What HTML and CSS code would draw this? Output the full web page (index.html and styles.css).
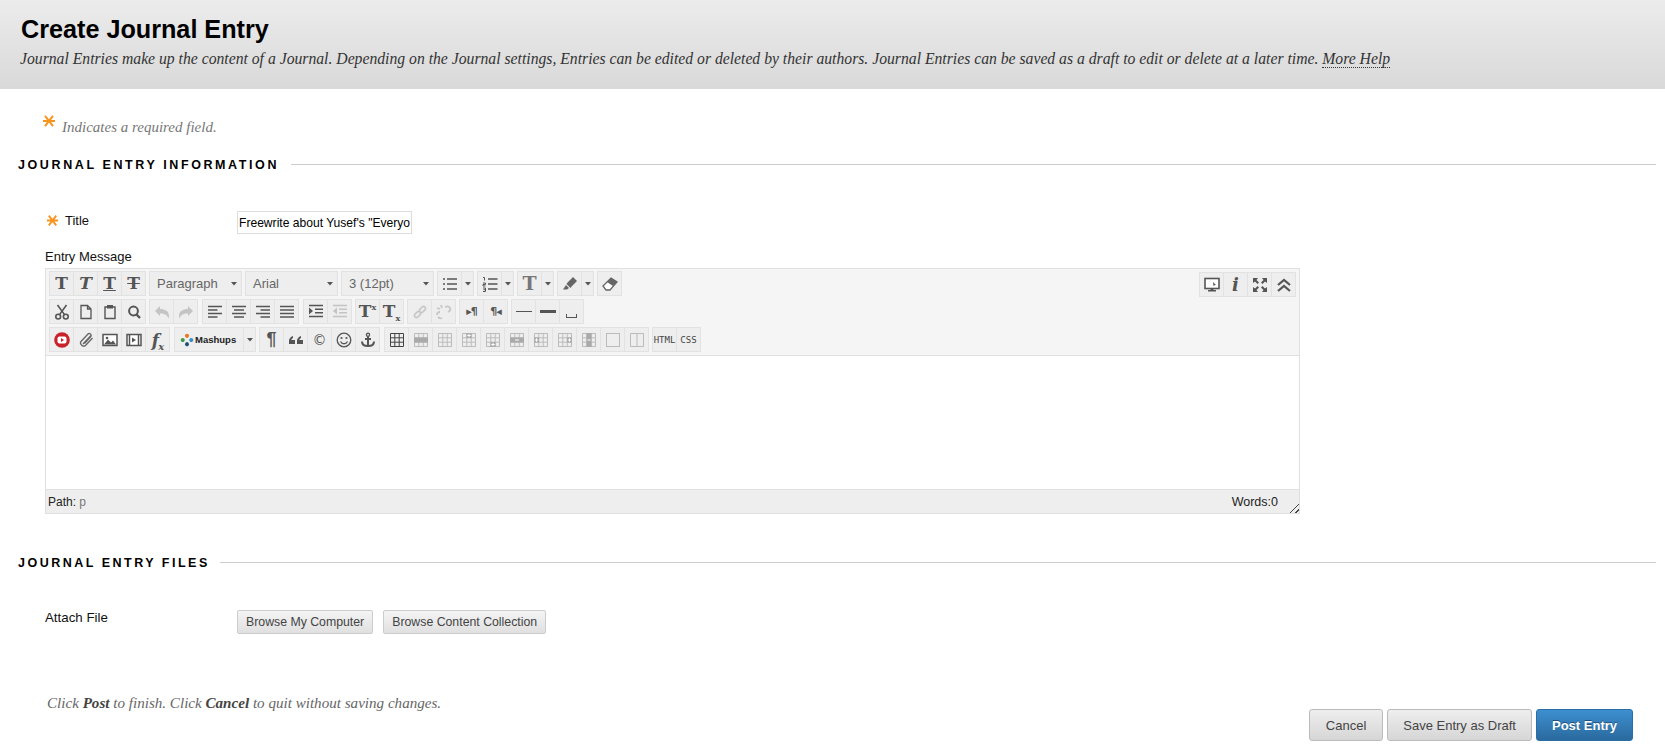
FILE: index.html
```html
<!DOCTYPE html>
<html lang="en">
<head>
<meta charset="utf-8">
<title>Create Journal Entry</title>
<link rel="stylesheet" href="styles.css">
</head>
<body>
<svg class="defs" width="0" height="0" aria-hidden="true">
<defs>
<symbol id="star" viewBox="0 0 14 14"><path d="M1 7h12M3 1.800l8 10.400M11 1.800L3 12.200" fill="none" stroke="#f7941e" stroke-width="2"/></symbol>
<symbol id="cut" viewBox="0 0 16 16"><g fill="none" stroke="#555" stroke-width="1.600"><circle cx="4.200" cy="12.600" r="2.400"/><circle cx="11.800" cy="12.600" r="2.400"/><path d="M3.500 1l7 9.600M12.500 1l-7 9.600"/></g></symbol>
<symbol id="doc" viewBox="0 0 16 16"><path d="M3 1.500h6.500L13 5v9.500H3zM9.500 1.500V5H13" fill="none" stroke="#555" stroke-width="1.300"/></symbol>
<symbol id="paste" viewBox="0 0 16 16"><path d="M5 3H3v11.500h10V3h-2" fill="none" stroke="#555" stroke-width="1.400"/><rect x="5" y="1" width="6" height="3.500" fill="#555"/></symbol>
<symbol id="find" viewBox="0 0 16 16"><circle cx="7.500" cy="7" r="4.400" fill="none" stroke="#555" stroke-width="2"/><path d="M10.500 10.500l3.500 3.500" stroke="#555" stroke-width="2.400"/></symbol>
<symbol id="undo" viewBox="0 0 16 16"><path d="M1 7l5-5v3c5 0 9 2 9 7 0 1-.3 2-.8 2.500C13.500 11 11 9.500 6 9.500V12z" fill="#c4c4c4"/></symbol>
<symbol id="redo" viewBox="0 0 16 16"><path d="M15 7l-5-5v3C5 5 1 7 1 12c0 1 .3 2 .8 2.500C2.500 11 5 9.500 10 9.500V12z" fill="#c4c4c4"/></symbol>
<symbol id="al" viewBox="0 0 16 16"><path d="M1 2.500h14M1 6h9.500M1 9.500h14M1 13h9.500" stroke="#555" stroke-width="1.500"/></symbol>
<symbol id="ac" viewBox="0 0 16 16"><path d="M1 2.500h14M3 6h10M1 9.500h14M3 13h10" stroke="#555" stroke-width="1.500"/></symbol>
<symbol id="ar" viewBox="0 0 16 16"><path d="M1 2.500h14M5.500 6H15M1 9.500h14M5.500 13H15" stroke="#555" stroke-width="1.500"/></symbol>
<symbol id="aj" viewBox="0 0 16 16"><path d="M1 2.500h14M1 6h14M1 9.500h14M1 13h14" stroke="#555" stroke-width="1.500"/></symbol>
<symbol id="ind" viewBox="0 0 16 16"><path d="M1 1.500h14M7 5.200h8M7 8.800h8M1 12.500h14" stroke="#555" stroke-width="1.500"/><path d="M1 3.500l4 3.500-4 3.500z" fill="#555"/></symbol>
<symbol id="out" viewBox="0 0 16 16"><path d="M1 1.500h14M7 5.200h8M7 8.800h8M1 12.500h14" stroke="#c4c4c4" stroke-width="1.500"/><path d="M5 3.500L1 7l4 3.500z" fill="#c4c4c4"/></symbol>
<symbol id="link" viewBox="0 0 16 16"><g fill="none" stroke="#c8c8c8" stroke-width="1.800"><rect x="-2.800" y="-2" width="7" height="4" rx="2" transform="translate(5 11) rotate(-45)"/><rect x="-4.200" y="-2" width="7" height="4" rx="2" transform="translate(11 5) rotate(-45)"/></g></symbol>
<symbol id="unlink" viewBox="0 0 16 16"><path d="M1 11c0-2 1-3 3-3M6 14c-2 1-3 0-4-1M9 3c2-1 4-1 5 1s0 3-2 4M5 1l1 3M1 4l3 1" fill="none" stroke="#c8c8c8" stroke-width="1.800"/></symbol>
<symbol id="list" viewBox="0 0 16 16"><path d="M1 3h2M1 8h2M1 13h2M5 3h10M5 8h10M5 13h10" stroke="#555" stroke-width="1.500"/></symbol>
<symbol id="olist" viewBox="0 0 16 16"><path d="M6 3h9.500M6 8h9.500M6 13h9.500" stroke="#555" stroke-width="1.700"/><path d="M1 1.500h1.500v3M1 7h2.500v1.500H1V10h2.500M1 12h2.500v3.500H1M1.500 13.700h2" fill="none" stroke="#555"/></symbol>
<symbol id="pen" viewBox="0 0 16 16"><path d="M6 6l5-5 4 4-5 5-1.500 2-4-4z" fill="#666"/><path d="M4 9l3 3-2 1.500H1z" fill="#666"/></symbol>
<symbol id="eraser" viewBox="0 0 16 16"><path d="M1 10l8-8 6 4-7 8H4z" fill="#fff" stroke="#666" stroke-width="1.300"/><path d="M5 6l6 4 4-4-6-4z" fill="#666"/></symbol>
<symbol id="yt" viewBox="0 0 16 16"><circle cx="8" cy="8" r="7.800" fill="#c9222a"/><rect x="3.500" y="4.500" width="9" height="7" rx="2" fill="#fff"/><path d="M7 6l3 2-3 2z" fill="#c9222a"/></symbol>
<symbol id="clip" viewBox="0 0 16 16"><path d="M14.500 6l-7 7.500c-2 2-6.500-1.500-4.500-4l7-7.500c1.500-1.500 4 .5 2.800 2.500L6.500 11.500M10.500 1.500L3 9.500M13 3.500L5 12" fill="none" stroke="#666" stroke-width="1.300"/></symbol>
<symbol id="img" viewBox="0 0 16 16"><rect x="1" y="2.500" width="14" height="11" fill="#fff" stroke="#555" stroke-width="1.500"/><path d="M2 12.500l4-5 3 3 2-2 3 4z" fill="#555"/><circle cx="5" cy="6" r="1.300" fill="#555"/></symbol>
<symbol id="film" viewBox="0 0 16 16"><rect x="1" y="2.500" width="14" height="11" fill="#fff" stroke="#555" stroke-width="1.500"/><path d="M3.500 2.500v11M12.500 2.500v11" stroke="#555" stroke-width="1.500"/><path d="M6 5.500l4 2.500-4 2.500z" fill="#555"/></symbol>
<symbol id="quote" viewBox="0 0 16 16"><path d="M1 12V9c0-2.500 1.500-4 4-5v2c-1 .5-1.500 1-1.500 2H7v4zM9 12V9c0-2.500 1.500-4 4-5v2c-1 .5-1.500 1-1.500 2H15v4z" fill="#555"/></symbol>
<symbol id="smile" viewBox="0 0 16 16"><circle cx="8" cy="8" r="6.800" fill="none" stroke="#555" stroke-width="1.300"/><circle cx="5.500" cy="6" r="1.100" fill="#555"/><circle cx="10.500" cy="6" r="1.100" fill="#555"/><path d="M4.500 9.500c1.500 3 5.500 3 7 0" fill="none" stroke="#555" stroke-width="1.300"/></symbol>
<symbol id="anchor" viewBox="0 0 16 16"><circle cx="8" cy="2.800" r="1.600" fill="none" stroke="#555" stroke-width="1.300"/><path d="M8 4.500V14M5 7h6M2 9.500c0 3.500 3 4.500 6 4.500s6-1 6-4.500" fill="none" stroke="#555" stroke-width="2"/></symbol>
<symbol id="tb" viewBox="0 0 16 16"><path d="M1.500 1.500h13v13h-13zM1.500 5.800h13M1.500 10.200h13M5.800 1.500v13M10.200 1.500v13" fill="none" stroke="#444" stroke-width="1"/></symbol>
<symbol id="gr" viewBox="0 0 16 16"><path d="M1.500 1.500h13v13h-13zM1.500 5.800h13M1.500 10.200h13M5.800 1.500v13M10.200 1.500v13" fill="none" stroke="#bbb" stroke-width="1"/></symbol>
<symbol id="t1" viewBox="0 0 16 16"><use href="#gr"/><rect x="1" y="5.500" width="14" height="5" fill="#aaa"/></symbol>
<symbol id="t3" viewBox="0 0 16 16"><use href="#gr"/><rect x="5.500" y="1" width="5" height="5" fill="#aaa"/><path d="M8 1.800v3.400M6.300 3.500h3.400" stroke="#fff"/></symbol>
<symbol id="t4" viewBox="0 0 16 16"><use href="#gr"/><rect x="5.500" y="10" width="5" height="5" fill="#aaa"/><path d="M8 10.800v3.400M6.300 12.500h3.400" stroke="#fff"/></symbol>
<symbol id="t5" viewBox="0 0 16 16"><use href="#gr"/><rect x="1" y="5.500" width="14" height="5" fill="#aaa"/><path d="M6 8h4" stroke="#fff"/></symbol>
<symbol id="t6" viewBox="0 0 16 16"><use href="#gr"/><rect x="1" y="5.500" width="5" height="5" fill="#aaa"/><path d="M3.500 6.300v3.400M1.800 8h3.400" stroke="#fff"/></symbol>
<symbol id="t7" viewBox="0 0 16 16"><use href="#gr"/><rect x="10" y="5.500" width="5" height="5" fill="#aaa"/><path d="M12.500 6.300v3.400M10.800 8h3.400" stroke="#fff"/></symbol>
<symbol id="t8" viewBox="0 0 16 16"><use href="#gr"/><rect x="5.500" y="1" width="5" height="14" fill="#aaa"/><path d="M6.500 8h3" stroke="#fff"/></symbol>
<symbol id="cell" viewBox="0 0 16 16"><rect x="1.500" y="1.500" width="13" height="13" fill="none" stroke="#bbb"/></symbol>
<symbol id="split" viewBox="0 0 16 16"><path d="M1.500 1.500h13v13h-13zM8 1.500v13" fill="none" stroke="#bbb"/></symbol>
<symbol id="mon" viewBox="0 0 16 16"><rect x="1" y="1.500" width="14" height="10" fill="#fff" stroke="#555" stroke-width="1.600"/><path d="M6.500 11.500h3V13H12v1.500H4V13h2.500z" fill="#555"/><path d="M9 5l3 3-1.500.3L9.500 9z" fill="#555"/></symbol>
<symbol id="full" viewBox="0 0 16 16"><path d="M1 1h5L4.500 3 7 5.500 5.500 7 3 4.500 1 6zM15 1v5l-2-1.500L10.500 7 9 5.500 11.500 3 10 1zM1 15v-5l2 1.500L5.500 9 7 10.500 4.500 13 6 15zM15 15h-5l1.500-2L9 10.500 10.500 9l2.500 2.500L15 10z" fill="#555"/></symbol>
<symbol id="up" viewBox="0 0 16 16"><path d="M2 8l6-5 6 5M2 14l6-5 6 5" fill="none" stroke="#555" stroke-width="2.200"/></symbol>
<symbol id="arrow" viewBox="0 0 6 4"><path d="M0 0h6L3 3.500z" fill="#555"/></symbol>
</defs>
</svg>

<header class="page-head">
  <h1 class="page-title">Create Journal Entry</h1>
  <p class="page-desc">Journal Entries make up the content of a Journal. Depending on the Journal settings, Entries can be edited or deleted by their authors. Journal Entries can be saved as a draft to edit or delete at a later time. <a class="help" href="#">More Help</a></p>
</header>

<main class="page-body">
  <p class="req-note"><svg class="star star-big"><use href="#star"/></svg><em>Indicates a required field.</em></p>

  <section class="sec sec-info">
    <h2 class="sec-title"><span>Journal Entry Information</span></h2>
    <div class="field field-title">
      <label class="field-label"><svg class="star"><use href="#star"/></svg>Title</label>
      <input class="title-input" type="text" value="Freewrite about Yusef's &quot;Everyo">
    </div>
    <div class="msg-label">Entry Message</div>
    <div class="editor">
      <div class="toolbar">
        <div class="tb-row">
          <div class="grp"><button class="b"><span class="t">T</span></button><button class="b"><span class="t ti">T</span></button><button class="b"><span class="t tu">T</span></button><button class="b"><span class="t ts">T</span></button></div>
          <div class="grp"><div class="sel">Paragraph<svg class="arr"><use href="#arrow"/></svg></div></div>
          <div class="grp"><div class="sel">Arial<svg class="arr"><use href="#arrow"/></svg></div></div>
          <div class="grp"><div class="sel">3 (12pt)<svg class="arr"><use href="#arrow"/></svg></div></div>
          <div class="grp"><button class="b"><svg class="i"><use href="#list"/></svg></button><button class="b a"><svg class="arr"><use href="#arrow"/></svg></button></div>
          <div class="grp"><button class="b"><svg class="i"><use href="#olist"/></svg></button><button class="b a"><svg class="arr"><use href="#arrow"/></svg></button></div>
          <div class="grp"><button class="b"><span class="t tl">T</span></button><button class="b a"><svg class="arr"><use href="#arrow"/></svg></button></div>
          <div class="grp"><button class="b"><svg class="i"><use href="#pen"/></svg></button><button class="b a"><svg class="arr"><use href="#arrow"/></svg></button></div>
          <div class="grp"><button class="b"><svg class="i"><use href="#eraser"/></svg></button></div>
          <div class="grp grp-end"><button class="b"><svg class="i"><use href="#mon"/></svg></button><button class="b"><span class="t ti info">i</span></button><button class="b"><svg class="i"><use href="#full"/></svg></button><button class="b"><svg class="i"><use href="#up"/></svg></button></div>
        </div>
        <div class="tb-row">
          <div class="grp"><button class="b"><svg class="i"><use href="#cut"/></svg></button><button class="b"><svg class="i"><use href="#doc"/></svg></button><button class="b"><svg class="i"><use href="#paste"/></svg></button><button class="b"><svg class="i"><use href="#find"/></svg></button></div>
          <div class="grp"><button class="b"><svg class="i"><use href="#undo"/></svg></button><button class="b"><svg class="i"><use href="#redo"/></svg></button></div>
          <div class="grp gap-l"><button class="b"><svg class="i"><use href="#al"/></svg></button><button class="b"><svg class="i"><use href="#ac"/></svg></button><button class="b"><svg class="i"><use href="#ar"/></svg></button><button class="b"><svg class="i"><use href="#aj"/></svg></button></div>
          <div class="grp gap-l"><button class="b"><svg class="i"><use href="#ind"/></svg></button><button class="b"><svg class="i"><use href="#out"/></svg></button></div>
          <div class="grp"><button class="b"><span class="t">T<sup class="sx">x</sup></span></button><button class="b"><span class="t">T<sub class="sx">x</sub></span></button></div>
          <div class="grp"><button class="b"><svg class="i"><use href="#link"/></svg></button><button class="b"><svg class="i"><use href="#unlink"/></svg></button></div>
          <div class="grp"><button class="b"><span class="dir">▸¶</span></button><button class="b"><span class="dir">¶◂</span></button></div>
          <div class="grp"><button class="b"><span class="hr hr-thin"></span></button><button class="b"><span class="hr hr-thick"></span></button><button class="b"><span class="nbsp"></span></button></div>
        </div>
        <div class="tb-row">
          <div class="grp"><button class="b"><svg class="i"><use href="#yt"/></svg></button><button class="b"><svg class="i"><use href="#clip"/></svg></button><button class="b"><svg class="i"><use href="#img"/></svg></button><button class="b"><svg class="i"><use href="#film"/></svg></button><button class="b"><span class="fx">f<sub>x</sub></span></button></div>
          <div class="grp gap-l"><div class="mash"><span class="dots"><i class="d d1"></i><i class="d d2"></i><i class="d d3"></i><i class="d d4"></i></span>Mashups</div><button class="b a"><svg class="arr"><use href="#arrow"/></svg></button></div>
          <div class="grp"><button class="b"><span class="pil">¶</span></button><button class="b"><svg class="i"><use href="#quote"/></svg></button><button class="b"><span class="copy">©</span></button><button class="b"><svg class="i"><use href="#smile"/></svg></button><button class="b"><svg class="i"><use href="#anchor"/></svg></button></div>
          <div class="grp gap-l"><button class="b"><svg class="i"><use href="#tb"/></svg></button><button class="b"><svg class="i"><use href="#t1"/></svg></button><button class="b"><svg class="i"><use href="#gr"/></svg></button><button class="b"><svg class="i"><use href="#t3"/></svg></button><button class="b"><svg class="i"><use href="#t4"/></svg></button><button class="b"><svg class="i"><use href="#t5"/></svg></button><button class="b"><svg class="i"><use href="#t6"/></svg></button><button class="b"><svg class="i"><use href="#t7"/></svg></button><button class="b"><svg class="i"><use href="#t8"/></svg></button><button class="b"><svg class="i"><use href="#cell"/></svg></button><button class="b"><svg class="i"><use href="#split"/></svg></button></div>
          <div class="grp"><button class="b"><span class="code">HTML</span></button><button class="b"><span class="code">CSS</span></button></div>
        </div>
      </div>
      <div class="edit-area"></div>
      <div class="statusbar"><span>Path: <span class="path-p">p</span></span><span class="words">Words:0</span><span class="grip"></span></div>
    </div>
  </section>

  <section class="sec sec-files">
    <h2 class="sec-title"><span>Journal Entry Files</span></h2>
    <div class="field field-attach">
      <div class="field-label attach-label">Attach File</div>
      <div class="attach-btns"><button class="btn-sm">Browse My Computer</button><button class="btn-sm">Browse Content Collection</button></div>
    </div>
  </section>

  <p class="submit-note">Click <b>Post</b> to finish. Click <b>Cancel</b> to quit without saving changes.</p>
  <div class="actions"><button class="btn btn-cancel">Cancel</button><button class="btn">Save Entry as Draft</button><button class="btn btn-primary">Post Entry</button></div>
</main>
</body>
</html>
```
FILE: styles.css
```css
* { box-sizing: border-box; }
html, body { margin: 0; padding: 0; }
body { background: #fff; color: #111; font-family: "Liberation Sans", Arial, sans-serif; font-size: 13px; height: 751px; overflow: hidden; }
.defs { position: absolute; }

.page-head { height: 89px; padding: 15px 20px 0; background: linear-gradient(#ececec, #d9d9d9); }
.page-title { margin: 0 0 0 1px; font-size: 25.2px; line-height: 28px; font-weight: bold; color: #000; }
.page-desc { margin: 7px 0 0; font-family: "Liberation Serif", serif; font-style: italic; font-size: 15.7px; line-height: 18px; color: #333; white-space: nowrap; }
.help { color: #333; text-decoration: none; border-bottom: 1px dotted #333; }

.page-body { padding: 0 9px 0 18px; }
.req-note { margin: 25px 0 0 24px; height: 22px; display: flex; align-items: flex-end; gap: 6px; font-family: "Liberation Serif", serif; font-size: 15px; color: #777; }
.star { width: 13px; height: 13px; flex: none; }
.star-big { width: 14px; height: 14px; margin-bottom: 8px; }

.sec-title { margin: 0; display: flex; align-items: center; gap: 12px; font-size: 12.5px; line-height: 14px; font-weight: bold; letter-spacing: 2.6px; text-transform: uppercase; color: #000; }
.sec-title::after { content: ""; flex: 1; margin-top: -2px; border-top: 1px solid #ccc; }
.sec-info { margin-top: 22px; }
.sec-files { margin-top: 42px; }
.sec-files .sec-title { gap: 10px; letter-spacing: 2.5px; }

.field { display: flex; padding-left: 28px; }
.field-label { width: 191px; flex: none; display: flex; gap: 6px; align-items: center; }
.field-title { margin-top: 39px; height: 23px; }
.field-title .field-label { height: 18px; }
.title-input { width: 175px; height: 23px; padding: 0 1px; border: 1px solid #ddd; font: 12.1px "Liberation Sans", sans-serif; color: #000; }
.msg-label { margin: 15px 0 0 27px; line-height: 16px; }

.editor { width: 1255px; height: 246px; margin: 3px 0 0 27px; border: 1px solid #e0e0e0; display: flex; flex-direction: column; }
.toolbar { height: 87px; padding: 2px 3px 0; background: #f5f5f5; border-bottom: 1px solid #e0e0e0; display: flex; flex-direction: column; gap: 3px; }
.tb-row { display: flex; gap: 3px; height: 25px; }
.grp { display: flex; }
.gap-l { margin-left: 1px; }
.grp-end { margin: 1px 0 0 auto; }
.b { width: 25px; height: 25px; padding: 0; margin-left: -1px; border: 1px solid #e2e2e2; background: #eee; display: flex; align-items: center; justify-content: center; font-family: "Liberation Serif", serif; color: #555; }
.b:first-child { margin-left: 0; }
.b.a { width: 13px; }
.i { width: 16px; height: 16px; }
.arr { width: 6px; height: 4px; flex: none; }
.sel { width: 93px; height: 25px; padding: 0 4px 0 7px; border: 1px solid #e2e2e2; background: #eee; display: flex; align-items: center; justify-content: space-between; font-size: 13px; color: #666; }
.t { font: bold 17px "DejaVu Serif", serif; color: #555; line-height: 1; }
.ti { font-style: italic; }
.tu { text-decoration: underline; text-decoration-thickness: 1px; }
.ts { text-decoration: line-through; text-decoration-thickness: 1px; }
.tl { font-size: 19px; color: #777; }
.info { font-size: 18px; }
.sx { font-size: 8px; line-height: 0; }
.dir { font: bold 11px "DejaVu Sans", sans-serif; color: #555; letter-spacing: -1px; white-space: nowrap; }
.hr { display: block; width: 16px; background: #555; }
.hr-thin { height: 1px; }
.hr-thick { height: 3px; }
.nbsp { width: 11px; height: 4px; margin-top: 8px; border: 1px solid #555; border-top: 0; }
.fx { font: italic bold 17px "DejaVu Serif", serif; color: #555; letter-spacing: -1px; }
.fx sub { font-size: 10px; line-height: 0; }
.mash { width: 70px; height: 25px; border: 1px solid #e2e2e2; background: #eee; display: flex; align-items: center; gap: 3px; padding-left: 7px; font-size: 9.5px; font-weight: bold; color: #222; }
.dots { width: 10px; height: 10px; display: grid; grid-template-columns: 1fr 1fr; grid-template-rows: 1fr 1fr; transform: rotate(45deg); gap: 2px; }
.d { display: block; border-radius: 50%; }
.d1 { background: #e87722; }
.d2 { background: #2f8fc8; }
.d3 { background: #3a9a4a; }
.d4 { background: #1f4f7a; }
.pil { font: bold 18px "Liberation Sans", sans-serif; color: #555; }
.copy { font: 14px "DejaVu Sans", sans-serif; color: #555; }
.code { font: 9px "DejaVu Sans Mono", monospace; color: #444; }
.edit-area { flex: 1; background: #fff; }
.statusbar { height: 24px; padding: 0 2px; background: #eee; border-top: 1px solid #e0e0e0; display: flex; align-items: center; font-size: 12px; color: #222; position: relative; }
.path-p { color: #777; }
.words { margin-left: auto; margin-right: 19px; font-size: 12.5px; }
.grip { position: absolute; right: 0; bottom: 0; width: 12px; height: 12px; background: repeating-linear-gradient(135deg, transparent 0 2px, #444 2px 3px, transparent 3px 4px); clip-path: polygon(100% 0, 100% 100%, 0 100%); }

.field-attach { margin-top: 38px; padding-left: 27px; }
.attach-label { width: 192px; height: 18px; font-size: 13.3px; }
.attach-btns { display: flex; gap: 10px; margin-top: 2px; }
.btn-sm { height: 24px; padding: 0 8px; border: 1px solid #ccc; border-radius: 2px; background: linear-gradient(#f4f4f4, #e0e0e0); font: 12.3px "Liberation Sans", sans-serif; color: #444; white-space: nowrap; }

.submit-note { margin: 60px 0 0 29px; font-family: "Liberation Serif", serif; font-style: italic; font-size: 15.1px; line-height: 18px; color: #666; }
.submit-note b { color: #444; }
.actions { display: flex; gap: 4px; justify-content: flex-end; padding-right: 23px; margin-top: -3px; }
.btn { height: 32px; padding: 0 15px; border: 1px solid #bbb; border-radius: 3px; background: linear-gradient(#eee, #d6d6d6); font: 13px "Liberation Sans", sans-serif; color: #444; white-space: nowrap; }
.btn-cancel { padding: 0 16px; }
.btn-primary { border-color: #2b6ea5; background: linear-gradient(#3d8fd0, #2a6a9e); color: #fff; font-weight: bold; text-shadow: 0 -1px 0 #1f4f7a; }
```
